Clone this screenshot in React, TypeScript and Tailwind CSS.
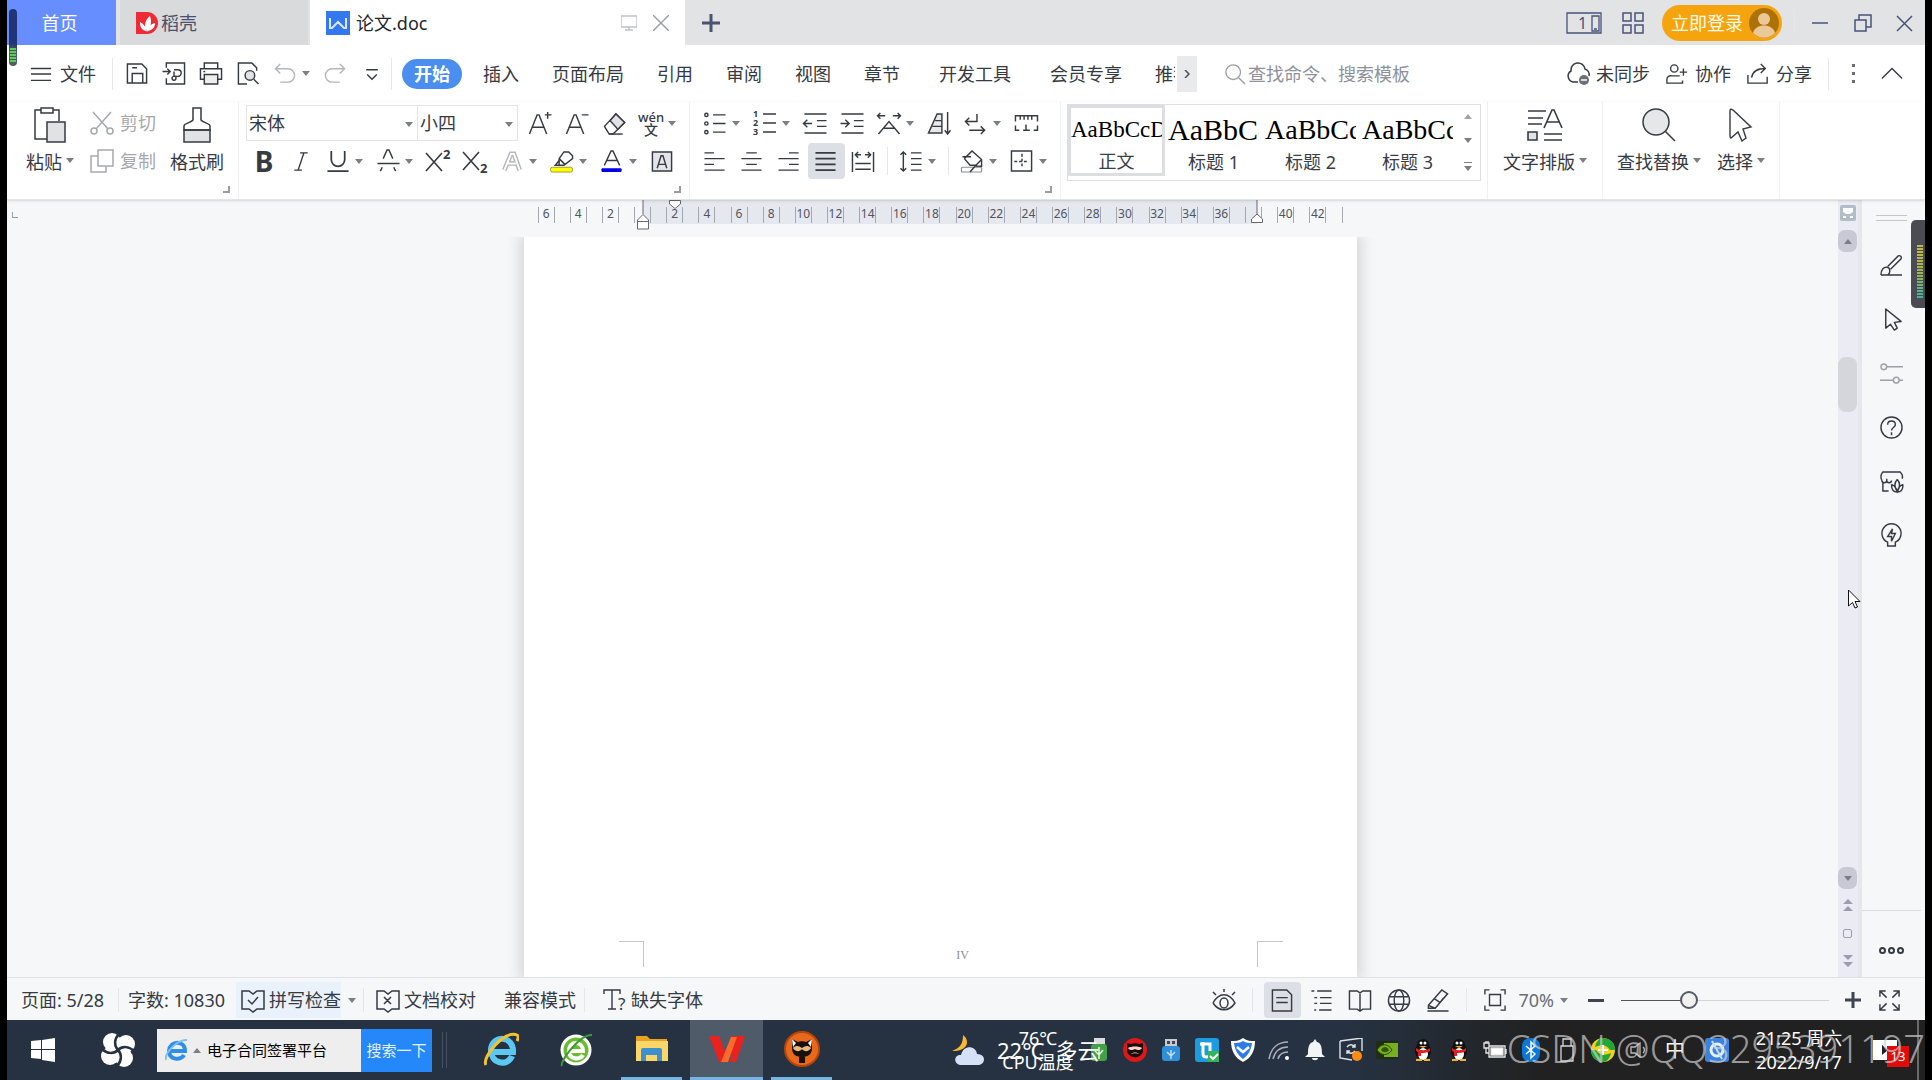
import type { ReactNode } from 'react';
import clsx from 'clsx';

const icons: Record<string, ReactNode> = {
  menu: <path d="M1 6h22M1 12h22M1 19h22" />,
  save: <path d="M2 2h15l5 5v15H2zM7 22v-10h11v10M7 6h5" />,
  exportPdf: (
    <path d="M4 6V1h19v22H4v-6M0 10h8M5 7l3 3-3 3M12 8h4a3 3 0 0 1 0 7h-4v-5M12 15a2 2 0 1 0 2 2v-3" />
  ),
  print: (
    <>
      <path d="M5 7V1h14v6M5 18H1V7h22v11h-4" />
      <path d="M5 13h14v10H5z" fill="#eceded" />
      <path d="M4 10h2" />
    </>
  ),
  preview: (
    <>
      <path d="M11 23H2V1h14l5 5v3" />
      <circle cx="14" cy="14" r="5" fill="#e0e2e6" />
      <path d="m18 18 5 5" />
    </>
  ),
  undo: <path d="M7 2 2 7l5 5M2 7h13a7 7 0 0 1 0 14H7" />,
  redo: <path d="m17 2 5 5-5 5M22 7H9a7 7 0 0 0 0 14h8" />,
  customize: <path d="M6 8h12M7 13l5 5 5-5" />,
  search: (
    <>
      <circle cx="10" cy="10" r="8" />
      <path d="m16 16 7 7" />
    </>
  ),
  cloud: (
    <>
      <path d="M12 20H7A6 6 0 0 1 5 9a7 7 0 0 1 14-2 6 6 0 0 1 4 7" />
      <circle cx="18" cy="18" r="5" fill="#6b6f78" stroke="none" />
      <path d="M15 18h6" stroke="#fff" />
    </>
  ),
  person: (
    <>
      <circle cx="9" cy="6" r="4" />
      <path d="M15 14H6a4 4 0 0 0-5 4v4h17v-3M15 10h8M19 6v8" />
    </>
  ),
  share: <path d="M1 13v9h21v-7M5 16c1-7 6-10 15-10M15 1l5 5-5 5" />,
  collapse: <path d="m1 17 11-11 11 11" />,
  scissors: (
    <>
      <circle cx="4" cy="20" r="3" />
      <circle cx="20" cy="20" r="3" />
      <path d="M3 1l15 17M21 1 6 18" />
    </>
  ),
  copy: <path d="M8 1h15v16H8zM8 7H1v16h15v-6" />,
  italic: <path d="M11 3h8M5 21h8M15 3 9 21" />,
  underline: <path d="M5 1v9a7 7 0 0 0 14 0V1M1 22h22" strokeWidth="1.8" />,
  strike: <path d="m7 9 4-9h2l4 9M1 14h23M4 22l2-4M20 22l-2-4" />,
  grow: <path d="M1 23 9 3h2l8 20M4 16h12M17 3h7M20 0v7" />,
  shrink: <path d="M1 23 9 3h2l8 20M4 16h12M17 3h7" />,
  eraser: (
    <>
      <path d="M2 15 14 2l9 9-12 12H7z" />
      <path d="m8 9 6-7 9 9-7 7z" fill="#e0e2e6" />
      <path d="M7 23h14" />
    </>
  ),
  effect: (
    <>
      <path d="m4 21 7-17h3l6 17M8 14h8" strokeWidth="5" stroke="#b5b7ba" />
      <path d="m4 21 7-17h3l6 17M8 14h8" strokeWidth="2" stroke="#fff" />
    </>
  ),
  highlight: (
    <>
      <rect x="0" y="18" width="23" height="5" rx="2" fill="#ffff00" stroke="#9a9a30" strokeWidth="1" />
      <path d="M14 2h5l4 4v3l-9 7H9V9zM9 9l6 6M9 11l-4 5h6" />
    </>
  ),
  fontColor: (
    <>
      <path d="m4 16 7-15h2l7 15M7 11h10" />
      <rect x="1" y="19" width="21" height="4" rx="1" fill="#0000e6" stroke="none" />
    </>
  ),
  charBox: (
    <>
      <path d="M2 2h20v20H2z" fill="#e3e5e8" />
      <path d="m7 19 4-13h2l4 13M9 15h6" />
    </>
  ),
  bullets: (
    <>
      <path d="M10 3h13M10 12h13M10 21h13" />
      <circle cx="3" cy="3" r="1.7" />
      <circle cx="3" cy="12" r="1.7" />
      <circle cx="3" cy="21" r="1.7" />
    </>
  ),
  outdent: <path d="M1 2h23M14 9h10M14 15h10M1 22h23M0 12h9M4 8l-4 4 4 4" />,
  indent: <path d="M1 2h23M14 9h10M14 15h10M1 22h23M0 12h9M5 8l4 4-4 4" />,
  scale: <path d="m1 23 11-13 11 13M6 17h12M0 4h8M16 4h8M3 1 0 4l3 3M21 1l3 3-3 3" />,
  sort: (
    <>
      <path d="M10 2h5v20H1z" fill="#e8e9ea" />
      <path d="M8 9h7M5 15h10M21 0v23M18 19l3 4 3-4" />
    </>
  ),
  wrap: <path d="M13 2v8H1M5 6l-4 4 4 4M5 19h16M17 15l4 4-4 4" />,
  tabs: <path d="M1 10V4h23v6M6 4v4M10 4v4M14 4v4M18 4v4M1 14v5h4M9 19h7M12 13v6M24 14v5h-4" />,
  left: <path d="M1 3h10M1 9h21M1 15h10M1 21h21" />,
  center: <path d="M6 3h11M1 9h21M6 15h11M1 21h21" />,
  right: <path d="M12 3h10M1 9h21M12 15h10M1 21h21" />,
  justify: <path d="M1 3h21M1 9h21M1 15h21M1 21h21" strokeWidth="2" />,
  distribute: <path d="M1 2v21M23 2v21M4 5h6M14 5h6M7 2 4 5l3 3M17 2l3 3-3 3M4 14h16M4 20h16" />,
  spacing: <path d="M4 2v20M1 5l3-3 3 3M1 19l3 3 3-3M12 3h11M12 9h11M12 15h11M12 21h11" />,
  bucket: (
    <>
      <path d="M4 9 12 1l10 9v7h-6M4 9l6 7h6l6-6M2 7h9" />
      <rect x="1" y="18" width="21" height="5" rx="1" stroke="#8a8d93" strokeWidth="1.2" />
      <path d="m16 16-6 7" />
    </>
  ),
  border: (
    <>
      <path d="M1 1h21v21H1z" />
      <path d="M12 4v15M4 12h15" strokeDasharray="3 2" />
    </>
  ),
  spell: <path d="M5 3H1v18h7l4 3 4-3h7V3h-7l-4 3-4-3H5M7 12l4 4 6-7" />,
  proof: <path d="M5 3H1v18h7l4 3 4-3h7V3h-7l-4 3-4-3H5M8 9l7 7M15 9l-7 7" />,
  eye: (
    <>
      <path d="M1 15c6-11 16-11 22 0-6 9-16 9-22 0M12 1v3M1 4l3 3M23 4l-3 3" />
      <ellipse cx="12" cy="15" rx="4" ry="5" />
    </>
  ),
  pageView: <path d="M2 1h15l5 5v17H2zM6 9h12M6 14h12" />,
  outline: <path d="M2 2h3M8 2h15M5 9h3M11 9h12M5 15h3M11 15h12M5 22h2M10 22h13" />,
  book: <path d="M1 2h8l3 2 3-2h8v19h-8l-3 2-3-2H1zM12 4v18" />,
  globe: (
    <>
      <circle cx="12" cy="12" r="11" />
      <ellipse cx="12" cy="12" rx="5" ry="11" />
      <path d="M2 8h20M2 16h20" />
    </>
  ),
  pen: <path d="m2 17 14-16 6 4L9 20H2zM2 17l7 3M8 10l6 4M1 23h22M18 9l-7 9" />,
  fit: <path d="M1 6V1h5M18 1h5v5M1 18v5h5M18 23h5v-5M6 6h12v12H6z" />,
  full: <path d="M2 8V2h6M2 2l7 7M16 2h6v6M22 2l-7 7M2 16v6h6M2 22l7-7M22 16v6h-6M22 22l-7-7" />,
  brush: <path d="M1 22h22M1 22c0-6 3-9 7-8 3 1 3 6 0 8M8 13 19 2c2-1 4 1 3 3L11 16" />,
  pointer: <path d="M6 1v20l5-4 4 6 3-2-3-6 7-1z" strokeLinejoin="round" />,
  sliders: (
    <>
      <circle cx="4" cy="5" r="3" />
      <circle cx="17" cy="19" r="3" />
      <path d="M7 5h17M0 19h14M20 19h4" />
    </>
  ),
  help: (
    <>
      <circle cx="12" cy="12" r="11" />
      <path d="M8 9c0-5 8-5 8 0 0 3-4 3-4 6M12 17v3" />
    </>
  ),
  shop: (
    <>
      <path d="M3 13v9h6M2 11C0 8 1 4 3 2h18c2 2 3 5 2 7M2 11c0 3 5 3 5 0V9M7 11c0 3 5 3 5 0" />
      <path d="M18 10c-3 3-3 8 0 13 3-5 3-10 0-13M12 15c0 5 2 8 6 8-1-5-3-7-6-8M24 15c0 5-2 8-6 8 1-5 3-7 6-8" />
    </>
  ),
  bulb: <path d="M8 19a10 10 0 1 1 8 0v4H8zM13 5l-5 8h4v5l4-8h-4z" />,
};

type IconProps = { name: string; className?: string };

function Icon({ name, className = 'h-6 w-6' }: IconProps) {
  return (
    <svg
      viewBox="0 0 24 24"
      className={clsx('shrink-0 overflow-visible', className)}
      fill="none"
      stroke="currentColor"
      strokeWidth="1.5"
      aria-hidden="true"
    >
      {icons[name]}
    </svg>
  );
}

function Caret({ className = '' }: { className?: string }) {
  return (
    <svg viewBox="0 0 8 5" className={clsx('h-[5px] w-2 shrink-0', className)} aria-hidden="true">
      <path d="M0 0h8L4 5z" fill="#7b7e84" />
    </svg>
  );
}

function Tool({
  label,
  icon,
  caret,
  active,
  className,
  children,
}: {
  label: string;
  icon?: string;
  caret?: boolean;
  active?: boolean;
  className?: string;
  children?: ReactNode;
}) {
  return (
    <button
      type="button"
      aria-label={label}
      className={clsx(
        'flex h-9 shrink-0 items-center gap-[5px] pl-[6px]',
        caret ? 'w-[50px]' : 'w-[37px]',
        active && 'rounded-sm bg-[#dcdfe5]',
        className
      )}
    >
      {icon ? <Icon name={icon} className="h-[23px] w-6" /> : children}
      {caret && <Caret />}
    </button>
  );
}

function BigTool({ label, caret, children }: { label: string; caret?: boolean; children: ReactNode }) {
  return (
    <button type="button" className="flex shrink-0 flex-col items-center">
      <span className="flex h-[42px] items-center">{children}</span>
      <span className="flex h-8 items-center gap-1">
        {label}
        {caret && <Caret className="-mt-1" />}
      </span>
    </button>
  );
}

function Group({ children, className, corner }: { children: ReactNode; className?: string; corner?: boolean }) {
  return (
    <div className={clsx('relative flex shrink-0 border-r border-[#f0f1f2] pt-[2px]', className)}>
      {children}
      {corner && (
        <span className="absolute right-2 bottom-[6px] h-[7px] w-[7px] border-r-2 border-b-2 border-[#9a9ca0]" />
      )}
    </div>
  );
}

const Row = ({ children }: { children: ReactNode }) => <div className="flex h-[38px] items-center">{children}</div>;

const Divider = ({ className = 'h-8' }: { className?: string }) => (
  <span className={clsx('w-px shrink-0 bg-[#e6e7e9]', className)} />
);

function TabBar() {
  return (
    <header className="flex h-[45px] shrink-0 items-stretch bg-[#e1e3e5] pt-px">
      <button type="button" className="-mt-px w-[109px] bg-[#668eff] pr-1 text-white">
        首页
      </button>
      <button type="button" className="-mt-px ml-1 flex w-[188px] items-center gap-[2px] bg-[#d9dadc] pt-px pl-[15px] text-[#4b4f6b]">
        <svg viewBox="0 0 24 24" className="h-6 w-6" aria-hidden="true">
          <path d="M1 1h11a11 11 0 0 1 0 22H1z" fill="#ec2b36" />
          <path d="M12 21C8 14 11 8 15 5c2 6 1 11-3 16M11 20c-5-1-6-5-6-9 4 2 6 5 6 9M13 20c1-5 3-7 7-8 0 5-3 7-7 8" fill="#fff" />
        </svg>
        稻壳
      </button>
      <div className="-mt-px ml-[2px] flex w-[375px] items-center bg-white px-4 pt-px">
        <svg viewBox="0 0 24 24" className="h-6 w-6" aria-hidden="true">
          <path d="M0 0h24v24H0z" fill="#3478f0" />
          <path d="M4 7v10h2l6-6 6 6h2V7" fill="none" stroke="#d9e8ff" strokeWidth="2" />
        </svg>
        <span className="ml-[6px] text-[#24262b]">论文.doc</span>
        <svg viewBox="0 0 16 16" className="ml-auto h-4 w-4 text-[#bfc1c8]" fill="none" stroke="currentColor" aria-hidden="true">
          <path d="M0 1h16v11H0zM8 12v3M4 15h8" strokeWidth="1.4" />
        </svg>
        <button type="button" aria-label="关闭标签" className="ml-4 text-[#9a9da6]">
          <svg viewBox="0 0 16 16" className="h-4 w-4" fill="none" stroke="currentColor" strokeWidth="1.4">
            <path d="m0 0 16 16M16 0 0 16" />
          </svg>
        </button>
      </div>
      <button type="button" aria-label="新建标签" className="flex w-[52px] items-center justify-center text-[#4a5370]">
        <svg viewBox="0 0 18 18" className="h-[18px] w-[18px]" fill="none" stroke="currentColor" strokeWidth="3">
          <path d="M9 0v18M0 9h18" />
        </svg>
      </button>
      <div className="ml-auto flex items-center text-[#4a5378]">
        <button type="button" aria-label="窗口模式">
          <svg viewBox="0 0 36 22" className="h-[22px] w-9" fill="none" stroke="currentColor" strokeWidth="1.3">
            <path d="M1 1h34v20H1zM26 4h7v15h-7zM28 17h3" />
            <text x="12" y="17" fontSize="16" fill="currentColor" stroke="none">1</text>
          </svg>
        </button>
        <button type="button" aria-label="应用" className="ml-5">
          <svg viewBox="0 0 22 22" className="h-[22px] w-[22px]" fill="none" stroke="currentColor" strokeWidth="1.5">
            <path d="M1 1h8v8H1zM13 1h8v8h-8zM1 13h8v8H1zM13 13h8v8h-8z" />
          </svg>
        </button>
        <button type="button" className="ml-[18px] flex h-9 w-[120px] items-center gap-[6px] rounded-full bg-[#f5a40e] pl-[9px] text-[#fffbe8]">
          立即登录
          <svg viewBox="0 0 30 30" className="h-[30px] w-[30px] shrink-0" aria-hidden="true">
            <circle cx="15" cy="15" r="15" fill="#ad7206" />
            <circle cx="15" cy="11" r="6" fill="#ecc898" />
            <path d="M4 25c2-10 20-10 22 0a15 15 0 0 1-22 0" fill="#ecc898" />
          </svg>
        </button>
        <Divider className="mr-1 ml-3 h-6 bg-[#d3d5d9]" />
        {[
          ['最小化', 'M0 8h16'],
          ['还原', 'M1 5h11v11H1zM5 5V0h12v12h-5'],
          ['关闭', 'm1 1 15 15M16 1 1 16'],
        ].map(([label, d]) => (
          <button key={label} type="button" aria-label={label} className="flex h-9 w-[42px] items-center justify-center">
            <svg viewBox="0 0 17 17" className="h-[17px] w-[17px] overflow-visible" fill="none" stroke="currentColor" strokeWidth="1.5">
              <path d={d} />
            </svg>
          </button>
        ))}
      </div>
    </header>
  );
}

const menuTabs = [
  { label: '插入' },
  { label: '页面布局' },
  { label: '引用' },
  { label: '审阅' },
  { label: '视图' },
  { label: '章节' },
  { label: '开发工具', wide: true },
  { label: '会员专享', wide: true },
];

function MenuBar() {
  return (
    <nav className="flex h-[57px] shrink-0 items-center bg-white pl-[23px] whitespace-nowrap">
      <button type="button" className="flex items-center gap-2">
        <Icon name="menu" className="h-[22px] w-[22px]" />
        文件
      </button>
      <Divider className="ml-4 h-8" />
      <div className="ml-[6px] flex">
        <Tool label="保存" icon="save" />
        <Tool label="输出为PDF" icon="exportPdf" />
        <Tool label="打印" icon="print" />
        <Tool label="打印预览" icon="preview" />
        <Tool label="撤销" icon="undo" caret className="text-[#b4b6ba]" />
        <Tool label="恢复" icon="redo" className="text-[#b4b6ba]" />
        <Tool label="自定义快速访问" icon="customize" />
      </div>
      <Divider className="h-8" />
      <button type="button" className="ml-[10px] h-[30px] w-[60px] rounded-full bg-[#4a8ff0] font-bold text-white">
        开始
      </button>
      <div className="ml-[21px] flex gap-[33px]">
        {menuTabs.map((tab) => (
          <button key={tab.label} type="button" className={clsx(tab.wide && 'pl-[6px]')}>
            {tab.label}
          </button>
        ))}
        <button type="button" className="w-5 overflow-hidden text-left">
          推荐
        </button>
      </div>
      <button type="button" aria-label="更多选项卡" className="ml-[2px] flex h-9 w-5 items-center justify-center bg-[#e9eaec]">
        <svg viewBox="0 0 6 8" className="h-2 w-[6px]" fill="none" stroke="#4a4d55" strokeWidth="1.5">
          <path d="m1 0 4 4-4 4" />
        </svg>
      </button>
      <label className="ml-[27px] flex items-center gap-[2px] text-[#9c9fa6]">
        <Icon name="search" className="h-[22px] w-[22px]" />
        <input
          type="search"
          aria-label="查找命令、搜索模板"
          placeholder="查找命令、搜索模板"
          className="w-[200px] bg-transparent outline-none placeholder:text-[#8e919c]"
        />
      </label>
      <div className="ml-auto flex items-center gap-4 pr-[22px]">
        <button type="button" className="flex items-center gap-[6px]">
          <Icon name="cloud" />
          未同步
        </button>
        <button type="button" className="flex items-center gap-[7px]">
          <Icon name="person" className="h-[22px] w-[22px]" />
          协作
        </button>
        <button type="button" className="flex items-center gap-[7px]">
          <Icon name="share" className="h-[22px] w-[22px]" />
          分享
        </button>
        <Divider />
        <button type="button" aria-label="更多" className="flex w-4 flex-col items-center gap-[5px]">
          <i className="h-[3px] w-[3px] bg-[#6b6e76]" />
          <i className="h-[3px] w-[3px] bg-[#6b6e76]" />
          <i className="h-[3px] w-[3px] bg-[#6b6e76]" />
        </button>
        <button type="button" aria-label="折叠功能区" className="ml-1">
          <Icon name="collapse" className="h-[22px] w-[22px]" />
        </button>
      </div>
    </nav>
  );
}

const styleItems = [
  { label: '正文', size: 'text-[23px]', active: true },
  { label: '标题 1', size: 'text-[30px]' },
  { label: '标题 2', size: 'text-[28px]' },
  { label: '标题 3', size: 'text-[28px]' },
];

function Ribbon() {
  return (
    <section className="z-10 flex h-[98px] shrink-0 border-b border-[#e3e4e6] bg-white whitespace-nowrap shadow-sm">
      <Group corner className="pr-[14px] pl-[19px]">
        <BigTool label="粘贴" caret>
          <svg viewBox="0 0 32 36" className="h-9 w-8" fill="none" stroke="currentColor" strokeWidth="1.5" aria-hidden="true">
            <path d="M7 3H1v29h12M19 3h6v11M7 1h12v5H7z" />
            <path d="M13 15h18v20H13z" fill="#e0e2e4" />
          </svg>
        </BigTool>
        <div className="ml-4 text-[#a6a8ac]">
          <Row>
            <button type="button" className="flex items-center gap-[6px]">
              <Icon name="scissors" />
              剪切
            </button>
          </Row>
          <Row>
            <button type="button" className="flex items-center gap-[6px]">
              <Icon name="copy" />
              复制
            </button>
          </Row>
        </div>
        <div className="ml-[14px] flex">
          <BigTool label="格式刷">
            <svg viewBox="0 0 28 36" className="h-9 w-7" fill="none" stroke="currentColor" strokeWidth="1.5" aria-hidden="true">
              <path d="M1 23h26v12H1z" fill="#e0e2e4" />
              <path d="M10 1h8v12c2 3 9 3 9 6v4H1v-4c0-3 7-3 9-6z" />
            </svg>
          </BigTool>
        </div>
      </Group>

      <Group corner className="pr-[6px] pl-[7px]">
        <div>
          <Row>
            <div className="mr-1 flex h-9 w-[272px] border border-[#e3e4e7]">
              <div className="relative w-[171px] border-r border-[#e3e4e7]">
                <select aria-label="字体" className="h-full w-full appearance-none bg-transparent pl-[2px]">
                  <option>宋体</option>
                </select>
                <Caret className="pointer-events-none absolute top-4 right-1" />
              </div>
              <div className="relative flex-1">
                <select aria-label="字号" className="h-full w-full appearance-none bg-transparent pl-[2px]">
                  <option>小四</option>
                </select>
                <Caret className="pointer-events-none absolute top-4 right-1" />
              </div>
            </div>
            <Tool label="增大字号" icon="grow" />
            <Tool label="减小字号" icon="shrink" />
            <Tool label="清除格式" icon="eraser" />
            <Tool label="拼音指南" caret>
              <svg viewBox="0 0 24 24" className="h-6 w-6 shrink-0 overflow-visible" fill="currentColor" aria-hidden="true">
                <text x="12" y="11" fontSize="13" fontWeight="500" textAnchor="middle">wén</text>
                <text x="12" y="24" fontSize="14" fontWeight="500" textAnchor="middle">文</text>
              </svg>
            </Tool>
          </Row>
          <Row>
            <Tool label="加粗">
              <span className="w-6 text-center text-[28px] leading-6 font-bold">B</span>
            </Tool>
            <Tool label="倾斜" icon="italic" />
            <Tool label="下划线" icon="underline" caret />
            <Tool label="删除线" icon="strike" caret />
            <Tool label="上标">
              <svg viewBox="0 0 24 24" className="h-6 w-6 shrink-0 overflow-visible" fill="none" stroke="currentColor" strokeWidth="1.6">
                <path d="m0 4 16 18M16 4 0 22" />
                <text x="17" y="10" fontSize="13" fontWeight="700" fill="currentColor" stroke="none">2</text>
              </svg>
            </Tool>
            <Tool label="下标">
              <svg viewBox="0 0 24 24" className="h-6 w-6 shrink-0 overflow-visible" fill="none" stroke="currentColor" strokeWidth="1.6">
                <path d="m0 3 16 18M16 3 0 21" />
                <text x="17" y="24" fontSize="13" fontWeight="700" fill="currentColor" stroke="none">2</text>
              </svg>
            </Tool>
            <Tool label="文字效果" icon="effect" caret />
            <Tool label="突出显示" icon="highlight" caret />
            <Tool label="字体颜色" icon="fontColor" caret />
            <Tool label="字符底纹" icon="charBox" />
          </Row>
        </div>
      </Group>

      <Group corner className="pr-[6px] pl-[7px]">
        <div>
          <Row>
            <Tool label="项目符号" icon="bullets" caret />
            <Tool label="编号" caret>
              <svg viewBox="0 0 24 24" className="h-6 w-6 shrink-0 overflow-visible" stroke="currentColor" strokeWidth="1.5">
                <path d="M10 3h13M10 12h13M10 21h13" />
                <g fontSize="9" fontWeight="700" fill="currentColor" stroke="none">
                  <text x="0" y="6">1</text>
                  <text x="0" y="15">2</text>
                  <text x="0" y="24">3</text>
                </g>
              </svg>
            </Tool>
            <Tool label="减少缩进" icon="outdent" />
            <Tool label="增加缩进" icon="indent" />
            <Tool label="中文版式" icon="scale" caret />
            <Tool label="排序" icon="sort" />
            <Tool label="显示段落标记" icon="wrap" caret />
            <Tool label="制表位" icon="tabs" />
          </Row>
          <Row>
            <Tool label="左对齐" icon="left" />
            <Tool label="居中对齐" icon="center" />
            <Tool label="右对齐" icon="right" />
            <Tool label="两端对齐" icon="justify" active />
            <Tool label="分散对齐" icon="distribute" />
            <Divider className="mx-[5px] h-7" />
            <Tool label="行距" icon="spacing" caret />
            <Divider className="mx-[5px] h-7" />
            <Tool label="底纹颜色" icon="bucket" caret />
            <Tool label="边框" icon="border" caret />
          </Row>
        </div>
      </Group>

      <Group className="px-[6px]">
        <div className="flex h-[77px] border border-[#dedfe1]">
          {styleItems.map((item) => (
            <button
              key={item.label}
              type="button"
              className={clsx(
                'flex w-[97px] flex-col items-center overflow-hidden border-3 text-[#3a3d44]',
                item.active ? 'mb-1 border-[#dddee0]' : 'border-transparent'
              )}
            >
              <span className={clsx("h-[42px] w-full overflow-hidden text-left font-['Liberation_Serif'] leading-[44px] text-black", item.size)}>
                AaBbCcDd
              </span>
              <span className="leading-6">{item.label}</span>
            </button>
          ))}
          <div className="flex w-6 flex-col items-center justify-around">
            <button type="button" aria-label="上一行">
              <Caret className="rotate-180 opacity-70" />
            </button>
            <button type="button" aria-label="下一行">
              <Caret />
            </button>
            <button type="button" aria-label="更多样式" className="border-t border-[#7b7e84] pt-[3px]">
              <Caret />
            </button>
          </div>
        </div>
      </Group>

      <Group className="px-[15px]">
        <BigTool label="文字排版" caret>
          <svg viewBox="0 0 36 34" className="h-[34px] w-9" fill="none" stroke="currentColor" strokeWidth="1.6" aria-hidden="true">
            <path d="M1 3h18M1 10h15M1 16h14M17 20l8-18h2l8 18M20 14h12M17 26h18M17 32h18" />
            <path d="M1 24h9v8H1z" fill="#e0e2e4" />
          </svg>
        </BigTool>
      </Group>
      <Group className="gap-4 px-[14px]">
        <BigTool label="查找替换" caret>
          <svg viewBox="0 0 34 34" className="h-[34px] w-[34px]" fill="none" stroke="currentColor" strokeWidth="1.5" aria-hidden="true">
            <circle cx="14" cy="14" r="13" fill="#e6e7e9" />
            <path d="m23 23 10 10" />
          </svg>
        </BigTool>
        <BigTool label="选择" caret>
          <svg viewBox="0 0 24 34" className="h-[34px] w-6" fill="none" stroke="currentColor" strokeWidth="1.4" aria-hidden="true">
            <path d="M1 3q0-3 3-1l18 17-8 2 3 9-4 3-4-9-7 6q-1 0-1-3z" />
          </svg>
        </BigTool>
      </Group>
    </section>
  );
}

const rulerLabels = [
  '6', '4', '2', '', '2', '4', '6', '8', '10', '12', '14', '16', '18',
  '20', '22', '24', '26', '28', '30', '32', '34', '36', '', '40', '42',
];

function Document() {
  return (
    <main className="flex min-w-0 flex-1 flex-col bg-[#f5f7f9]">
      <div className="flex h-[37px] shrink-0">
        <span className="mt-3 ml-[5px] h-[6px] w-[6px] border-b border-l border-[#999ca3]" />
        <div className="flex flex-1 justify-center pl-[25px]">
          <div className="relative h-6 w-[833px] pt-[7px]">
            <div className="absolute top-0 bottom-0 left-[119px] w-[614px] bg-[#e6e8f0]" />
            <div className="relative flex w-[826px] pl-[6px] text-[12px] leading-[13px] text-[#50545e]">
              {rulerLabels.map((label, i) => (
                <div key={i} className="flex flex-1 justify-center">
                  <span className="flex h-4 w-[17px] justify-center border-x border-[#a5a8b0]">{label}</span>
                </div>
              ))}
              <span className="ml-2 h-4 w-2 border-l border-[#a5a8b0]" />
            </div>
            <svg viewBox="0 0 12 30" className="absolute top-0 left-[113px] h-[30px] w-3" fill="#fff" stroke="#666972">
              <path d="M6 0v14M.5 20 6 14.500l5.500 5.500v9H.5zM.5 21.500h11" />
            </svg>
            <svg viewBox="0 0 12 9" className="absolute top-0 left-[145px] h-[9px] w-3" fill="#fff" stroke="#666972">
              <path d="M.5.500h11V4L6 8.500.500 4z" />
            </svg>
            <svg viewBox="0 0 12 24" className="absolute top-0 left-[727px] h-6 w-3" fill="#fff" stroke="#666972">
              <path d="M6 0v14M.5 22.500V19L6 14l5.500 5v3.500z" />
            </svg>
          </div>
        </div>
      </div>
      <div className="flex flex-1 justify-center overflow-hidden pl-9">
        <article className="flex w-[833px] flex-col justify-end bg-white pr-[74px] pb-[10px] pl-[95px] shadow-[0_0_14px_4px_rgba(0,0,0,0.14)]">
          <div className="flex justify-between">
            <span className="h-[26px] w-[25px] border-t border-r border-[#c4c6ca]" />
            <span className="pt-[6px] pl-6 font-['Liberation_Serif'] text-[12px] leading-4 text-[#8c8f94]">IV</span>
            <span className="h-[26px] w-[26px] border-t border-l border-[#c4c6ca]" />
          </div>
        </article>
      </div>
    </main>
  );
}

function ScrollBar() {
  return (
    <div className="flex w-6 shrink-0 flex-col border-r-4 border-[#e6e7ea] bg-[#ebecf3] text-[#9c9cb2]">
      <svg viewBox="0 0 16 16" className="mt-[5px] ml-[2px] h-4 w-4" aria-hidden="true">
        <rect width="16" height="16" rx="2" fill="#b3bcc9" />
        <path d="M3 3h10v4l-3 2H6L3 7zM3 11h3v2H3zM10 11h3v2h-3z" fill="#fff" />
      </svg>
      <button type="button" aria-label="向上滚动" className="mt-[9px] flex h-[22px] w-[19px] items-center justify-center rounded-[7px] bg-[#c9c9d6]">
        <Caret className="rotate-180" />
      </button>
      <div className="mt-[105px] h-[55px] w-[19px] rounded-[8px] bg-[#d5d6dc]" />
      <button type="button" aria-label="向下滚动" className="mt-auto flex h-[22px] w-[19px] items-center justify-center rounded-[7px] bg-[#c9c9d6]">
        <Caret />
      </button>
      <button type="button" aria-label="上一页" className="mt-2 flex h-4 w-[19px] items-center justify-center">
        <svg viewBox="0 0 10 12" className="h-3 w-[10px]" fill="currentColor">
          <path d="m0 5 5-5 5 5zM0 12l5-5 5 5z" />
        </svg>
      </button>
      <button type="button" aria-label="选择浏览对象" className="mt-3 flex h-4 w-[19px] items-center justify-center">
        <i className="h-[9px] w-[9px] rounded-[2px] border border-current" />
      </button>
      <button type="button" aria-label="下一页" className="mt-3 mb-2 flex h-4 w-[19px] items-center justify-center">
        <svg viewBox="0 0 10 12" className="h-3 w-[10px]" fill="currentColor">
          <path d="m0 0 5 5 5-5zM0 7l5 5 5-5z" />
        </svg>
      </button>
    </div>
  );
}

const sideTools = [
  ['样式', 'brush'],
  ['选择', 'pointer'],
  ['设置', 'sliders'],
  ['帮助', 'help'],
  ['稻壳资源', 'shop'],
  ['备份', 'bulb'],
];

function SidePanel() {
  return (
    <aside className="relative flex w-[63px] shrink-0 flex-col items-center bg-[#f5f7f9] pt-[15px] pr-1">
      <div className="h-[6px] w-[31px] border-y border-[#c5c7cb]" />
      <div className="mt-[17px] flex flex-col">
        {sideTools.map(([label, icon]) => (
          <button
            key={label}
            type="button"
            aria-label={label}
            className={clsx('flex h-[54px] w-9 items-center justify-center', icon === 'sliders' && 'text-[#9da0a7]')}
          >
            <Icon name={icon} className="h-[23px] w-[23px]" />
          </button>
        ))}
      </div>
      <div className="mt-auto flex h-[67px] w-full items-center border-t border-[#dcdee1] pt-3 pl-[17px]">
        <button type="button" aria-label="更多" className="flex gap-[2px]">
          <i className="h-[7px] w-[7px] rounded-full border-2 border-current" />
          <i className="h-[7px] w-[7px] rounded-full border-2 border-current" />
          <i className="h-[7px] w-[7px] rounded-full border-2 border-current" />
        </button>
      </div>
      {/* volume meter */}
      <div className="absolute top-5 right-0 h-[88px] w-[14px] rounded-l-[5px] bg-[#4b4b54] pt-6 pl-[6px]">
        <div className="h-[54px] w-[6px] bg-[repeating-linear-gradient(to_bottom,#4b4b54_0_1px,transparent_1px_3px),linear-gradient(to_bottom,#c8b848,#a3b64a_50%,#3fb0a0)]" />
      </div>
      <svg viewBox="0 0 13 20" className="absolute top-[389px] -left-[14px] h-5 w-[13px]" fill="#fff" stroke="#111" aria-hidden="true">
        <path d="M.5 1v16l4-3.500 2.500 5.500 2.500-1-2.500-5.500h5z" />
      </svg>
    </aside>
  );
}

function StatusBar() {
  return (
    <footer className="flex h-[43px] shrink-0 items-center border-t border-[#dfe1e4] bg-[#f5f7f9] pt-[2px] pl-[14px] whitespace-nowrap">
      <span className="w-[97px]">页面: 5/28</span>
      <Divider className="h-6" />
      <span className="ml-[9px]">字数: 10830</span>
      <button type="button" className="ml-[11px] flex h-9 items-center gap-1 bg-[#e9f1fa] pl-[5px]">
        <Icon name="spell" />
        拼写检查
      </button>
      <Caret className="ml-[7px]" />
      <Divider className="ml-[7px] h-6" />
      <button type="button" className="ml-3 flex items-center gap-1">
        <Icon name="proof" />
        文档校对
      </button>
      <span className="ml-7">兼容模式</span>
      <Divider className="ml-2 h-6" />
      <button type="button" className="ml-[18px] flex items-center gap-1">
        <svg viewBox="0 0 24 24" className="h-6 w-6 overflow-visible" fill="none" stroke="currentColor" strokeWidth="1.4" aria-hidden="true">
          <path d="M1 6V2h16v4M9 2v19M5 21h8" />
          <text x="15" y="22" fontSize="17" fill="currentColor" stroke="none">?</text>
        </svg>
        缺失字体
      </button>

      <div className="ml-auto flex items-center">
        <button type="button" aria-label="护眼模式">
          <Icon name="eye" />
        </button>
        <Divider className="ml-4 h-6" />
        <div className="ml-[11px] flex gap-[2px]">
          <Tool label="页面视图" icon="pageView" active />
          <Tool label="大纲视图" icon="outline" />
          <Tool label="阅读版式" icon="book" />
          <Tool label="Web版式" icon="globe" />
          <Tool label="写作模式" icon="pen" />
        </div>
        <Divider className="mr-[17px] ml-[9px] h-6" />
        <button type="button" aria-label="适合页面">
          <Icon name="fit" className="h-[22px] w-[22px]" />
        </button>
        <button type="button" className="ml-3 flex items-center gap-[6px] text-[#6a6d75]">
          70%
          <Caret />
        </button>
        <button type="button" aria-label="缩小" className="ml-5 flex h-6 w-4 items-center">
          <i className="h-[3px] w-4 bg-[#3f4450]" />
        </button>
        <input
          type="range"
          aria-label="缩放"
          min={0}
          max={100}
          defaultValue={31}
          className="ml-[17px] h-5 w-[208px] appearance-none bg-[linear-gradient(to_right,#4f535c_33%,#d3d5d8_33%)] bg-[length:100%_1px] bg-center bg-no-repeat [&::-webkit-slider-thumb]:h-[18px] [&::-webkit-slider-thumb]:w-[18px] [&::-webkit-slider-thumb]:appearance-none [&::-webkit-slider-thumb]:rounded-full [&::-webkit-slider-thumb]:border-2 [&::-webkit-slider-thumb]:border-[#565a62] [&::-webkit-slider-thumb]:bg-[#f1f1f2]"
        />
        <button type="button" aria-label="放大" className="ml-4">
          <svg viewBox="0 0 16 16" className="h-4 w-4" stroke="#3f4450" strokeWidth="3">
            <path d="M8 0v16M0 8h16" />
          </svg>
        </button>
        <button type="button" aria-label="全屏显示" className="mr-6 ml-[17px]">
          <Icon name="full" className="h-[23px] w-[23px]" />
        </button>
      </div>
    </footer>
  );
}

const penguin = (
  <svg viewBox="0 0 20 24" className="h-6 w-5">
    <ellipse cx="10" cy="13" rx="8" ry="9" fill="#101010" />
    <circle cx="10" cy="7" r="6" fill="#101010" />
    <ellipse cx="10" cy="16" rx="5" ry="6" fill="#fff" />
    <circle cx="8" cy="5" r="1.500" fill="#fff" />
    <circle cx="12" cy="5" r="1.500" fill="#fff" />
    <path d="M6 8h8l-4 2z" fill="#f5a623" />
    <path d="M3 10c4 3 10 3 14 0v3c-3 2-7 2-9 2v3H5v-4l-2-1z" fill="#e02020" />
    <path d="M3 21h6v2H3zM11 21h6v2h-6z" fill="#f5b030" />
  </svg>
);

const trayIcons: [string, ReactNode][] = [
  ['U盘', (
    <svg viewBox="0 0 18 24" className="h-6 w-[18px]">
      <path d="M4 0h11v7H4z" fill="#d9dde0" />
      <rect x="1" y="6" width="16" height="17" rx="3" fill="#43a047" />
      <path d="M9 21V9M5 13l4 4 4-5" fill="none" stroke="#e8f5e9" strokeWidth="1.500" />
    </svg>
  )],
  ['安全卫士', (
    <svg viewBox="0 0 26 26" className="h-[26px] w-[26px]">
      <circle cx="13" cy="13" r="12" fill="#e01717" />
      <path d="M5 6l4 1c2-1 6-1 8 0l4-1v9c-3 7-13 7-16 0z" fill="#1b0d0d" />
      <path d="M6 11c3-2 11-2 14 0-2 3-5 2-7 1-2 1-5 2-7-1M9 17c2-2 6-2 8 0-2-1-6-1-8 0" fill="#f8d9c8" />
    </svg>
  )],
  ['USB', (
    <svg viewBox="0 0 20 24" className="h-6 w-5">
      <path d="M4 1h12v7H4z" fill="#c8ccd0" />
      <path d="M6 3h3v3H6zM11 3h3v3h-3z" fill="#445" />
      <rect x="1" y="8" width="18" height="15" rx="3" fill="#2f8fd8" />
      <path d="M10 21v-9M6 14l4 4 4-4" fill="none" stroke="#bfe0f8" strokeWidth="1.500" />
    </svg>
  )],
  ['同步', (
    <svg viewBox="0 0 24 24" className="h-6 w-6">
      <rect width="24" height="24" rx="3" fill="#1c9be0" />
      <path d="M8 4v12c0 4 7 4 7 0V6H5" fill="none" stroke="#fff" strokeWidth="3" />
      <path d="M13 13h11v11H13z" fill="#35b558" />
      <path d="m15 18 3 3 5-5" fill="none" stroke="#fff" strokeWidth="2" />
    </svg>
  )],
  ['电脑管家', (
    <svg viewBox="0 0 24 24" className="h-6 w-6">
      <path d="M12 0c4 3 8 3 12 3 0 10-4 17-12 21C4 20 0 13 0 3c4 0 8 0 12-3" fill="#fff" />
      <path d="M12 3c3 2 6 2 9 2-1 8-4 12-9 16C7 17 4 13 3 5c3 0 6 0 9-2" fill="#2e7be8" />
      <path d="m6 9 6 5 6-5" fill="none" stroke="#fff" strokeWidth="2.500" />
    </svg>
  )],
  ['网络', (
    <svg viewBox="0 0 22 22" className="h-[22px] w-[22px]" fill="none" stroke="#aab1ba" strokeWidth="1.500">
      <path d="M1 20C3 9 10 3 20 3M5 20c2-8 7-12 15-12M10 20c1-4 4-7 10-7" />
      <circle cx="19" cy="19" r="2" fill="#fff" stroke="none" />
    </svg>
  )],
  ['提醒', (
    <svg viewBox="0 0 22 22" className="h-[22px] w-[22px]" fill="#f2f4f6">
      <path d="M11 0 13 3c4 1 5 5 5 12l3 3H1l3-3C4 8 5 4 9 3zM8 19h6c0 3-6 3-6 0" />
    </svg>
  )],
  ['更新', (
    <svg viewBox="0 0 24 24" className="h-6 w-6" fill="none" stroke="#dfe3e7" strokeWidth="1.400">
      <path d="M1 3 23 0v13M1 3v17l12 2M8 9c2-3 6-3 8 0M16 6v3h-3M16 13c-2 3-6 3-8 0M8 16v-3h3" />
      <circle cx="18" cy="18" r="5" fill="#ff8c10" stroke="none" />
    </svg>
  )],
  ['NVIDIA', (
    <svg viewBox="0 0 22 18" className="h-[18px] w-[22px]">
      <path d="M0 0h22v18H0z" fill="#1f2d14" />
      <path d="M8 2h14v14H8z" fill="#76b020" />
      <path d="M1 9c4-7 11-7 15 0-4 6-11 6-15 0" fill="#76b020" stroke="#2c4410" />
      <path d="M5 9c2-4 6-4 8 0-2 3-6 3-8 0" fill="#35560c" />
    </svg>
  )],
  ['QQ', penguin],
  ['QQ 2', penguin],
  ['电池', (
    <svg viewBox="0 0 24 18" className="h-[18px] w-6" fill="none" stroke="#e8e8e8" strokeWidth="1.300">
      <path d="M6 5h16v11H6zM23 8v5M1 2h5v5H1zM3 0v2M5 0v2M3 7v5h3" />
      <path d="M8 7h12v7H8z" fill="#fff" />
    </svg>
  )],
  ['蓝牙', (
    <svg viewBox="0 0 18 24" className="h-6 w-[18px]">
      <rect width="18" height="24" rx="8" fill="#0a78d8" />
      <path d="m4 8 9 8-4 4V4l4 4-9 8" fill="none" stroke="#fff" strokeWidth="1.500" />
    </svg>
  )],
  ['弹出设备', (
    <svg viewBox="0 0 14 24" className="h-6 w-[14px]" fill="none" stroke="#d8d8d8" strokeWidth="1.300">
      <path d="M3 8V1h8v7M1 8h12v15H1z" />
    </svg>
  )],
  ['360', (
    <svg viewBox="0 0 24 24" className="h-6 w-6">
      <circle cx="12" cy="12" r="12" fill="#f5d020" />
      <path d="M12 0a12 12 0 0 1 12 12h-5c-3-5-8-6-15-3 1-5 4-9 8-9M12 24A12 12 0 0 1 0 12h5c3 5 8 6 15 3-1 5-4 9-8 9" fill="#1fa83a" />
      <path d="M12 7v10M7 12h10" stroke="#fff" strokeWidth="2" />
    </svg>
  )],
  ['音量', (
    <svg viewBox="0 0 18 18" className="h-[18px] w-[18px]" fill="none" stroke="#bbb" strokeWidth="1.300">
      <path d="M1 6h4l5-4v14l-5-4H1zM13 6c2 2 2 4 0 6" />
    </svg>
  )],
];

function Taskbar() {
  return (
    <div className="relative flex h-[60px] shrink-0 items-center bg-[linear-gradient(to_right,#263242_70%,#212121_80%)] text-white">
      <button type="button" aria-label="开始菜单" className="ml-6">
        <svg viewBox="0 0 24 24" className="h-6 w-6" fill="#fff">
          <path d="M0 3 10 2v9H0zM11 2 24 0v11H11zM0 12h10v9L0 20zM11 12h13v12l-13-2z" />
        </svg>
      </button>
      <button type="button" aria-label="助手" className="ml-[46px]">
        <svg viewBox="0 0 34 34" className="h-[34px] w-[34px]">
          <g fill="#fff">
            <circle cx="11" cy="9" r="9" />
            <circle cx="25" cy="11" r="9" />
            <circle cx="23" cy="25" r="9" />
            <circle cx="9" cy="23" r="9" />
          </g>
          <path d="M17 17c-4-4-4-11 1-16M17 17c4-4 11-4 16 1M17 17c4 4 4 11-1 16M17 17c-4 4-11 4-16-1" fill="none" stroke="#263242" strokeWidth="2.500" />
        </svg>
      </button>
      <div className="ml-[22px] flex h-[43px] items-center bg-[#eeeeef]">
        <svg viewBox="0 0 24 24" className="ml-2 h-6 w-6" fill="none" aria-hidden="true">
          <path d="M4 13h16c0-11-15-11-16 0 0 9 12 10 15 4" stroke="#2f8fe8" strokeWidth="4" />
          <path d="M1 22C-1 16 12 1 22 2" stroke="#7cc0f5" strokeWidth="2" />
        </svg>
        <Caret className="ml-1 rotate-180" />
        <input
          type="text"
          aria-label="搜索"
          defaultValue="电子合同签署平台"
          className="ml-[6px] w-[154px] bg-transparent text-[15px] text-black outline-none"
        />
        <button type="button" className="h-full w-[71px] bg-[#2488fb] text-[15px] text-[#e6f2ff]">
          搜索一下
        </button>
      </div>
      <span className="ml-[10px] h-9 w-[5px] border-x border-[#46525f]" />
      <div className="ml-4 flex h-full">
        <button type="button" aria-label="Internet Explorer" className="flex w-[75px] items-center justify-center">
          <svg viewBox="0 0 36 36" className="h-9 w-9" fill="none">
            <path d="M8 20h22c1-16-20-18-22-3-1 15 17 18 21 7" stroke="#5cc8f2" strokeWidth="6" />
            <path d="M3 33C-2 26 22-3 34 3c2 1 1 4 0 6" stroke="#f2c230" strokeWidth="3" />
          </svg>
        </button>
        <button type="button" aria-label="360浏览器" className="flex w-[75px] items-center justify-center">
          <svg viewBox="0 0 36 36" className="h-9 w-9" fill="none">
            <circle cx="18" cy="18" r="14" fill="#69bd2c" stroke="#fff" strokeWidth="3" />
            <path d="M11 19h14c0-10-14-11-14 0 0 9 11 9 14 4" stroke="#fff" strokeWidth="4" />
            <path d="M4 34c-3-4 18-32 30-31" stroke="#3d9a35" strokeWidth="2" />
          </svg>
        </button>
        <button type="button" aria-label="资源管理器" className="mx-2 flex w-[61px] items-center justify-center border-b-3 border-[#76b4e4]">
          <svg viewBox="0 0 34 30" className="h-[30px] w-[34px]">
            <path d="M1 2h11l3 3h17v22H1z" fill="#e9a320" />
            <path d="M1 7h32v20H1z" fill="#fbd668" />
            <path d="M6 16q0-2 2-2h17q2 0 2 2v11h-5v-6H11v6H6z" fill="#3d8fd0" />
          </svg>
        </button>
        <button type="button" aria-label="WPS" className="flex w-[73px] items-center justify-center border-b-3 border-[#76b4e4] bg-[#4f5b68]">
          <svg viewBox="0 0 36 28" className="h-7 w-9" fill="none" strokeLinejoin="round">
            <path d="M0 1h10l5 13 3 5-4 8h-4z" fill="#e8231f" />
            <path d="M36 1H26c-4 0-5 2-4 5l2 5-3 16h6z" fill="#e8231f" />
            <path d="M12 27 22 2h6l-9 25z" fill="#ff6a2a" />
          </svg>
        </button>
        <button type="button" aria-label="录屏" className="ml-2 flex w-[61px] items-center justify-center border-b-3 border-[#76b4e4]">
          <svg viewBox="0 0 36 36" className="h-9 w-9">
            <circle cx="18" cy="18" r="17" fill="#e8681c" stroke="#b84508" strokeWidth="2" />
            <path d="M8 8l6 3c2-1 6-1 8 0l6-3v9c0 7-5 9-10 9S8 24 8 17z" fill="#17100c" />
            <path d="m8 8 4 4-3 4zM28 8l-4 4 3 4z" fill="#fff" />
            <path d="M9 17c3-3 6-2 9 0 3-2 6-3 9 0-2 4-7 4-9 1-2 3-7 3-9-1" fill="#e8b87c" />
            <path d="M15 26h6v6h-6z" fill="#17100c" />
          </svg>
        </button>
      </div>

      <div className="ml-auto flex h-full items-center">
        <svg viewBox="0 0 34 32" className="h-8 w-[34px]" aria-hidden="true">
          <path d="M12 1c8 6 4 17-11 16 8-3 11-7 11-16" fill="#f8b830" />
          <path d="M9 31c-7-1-6-11 1-10 3-11 15-9 16-1 9 0 9 10 2 11z" fill="#d5e1f7" />
        </svg>
        <div className="relative ml-3 flex w-[84px] shrink-0 items-center text-[22px] whitespace-nowrap">
          <span className="shrink-0">22℃&nbsp; 多云</span>
          <div className="absolute top-1/2 left-1 w-[74px] -translate-y-1/2 text-center text-[18px] leading-6">
            76℃
            <br />
            CPU温度
          </div>
        </div>
        {trayIcons.map(([label, icon]) => (
          <button key={label} type="button" aria-label={label} className="flex w-9 shrink-0 items-center justify-center">
            {icon}
          </button>
        ))}
        <button type="button" className="w-9 text-[20px]">
          中
        </button>
        <button type="button" aria-label="输入法" className="ml-[6px] flex w-9 justify-center">
          <svg viewBox="0 0 24 24" className="h-6 w-6">
            <rect width="24" height="24" rx="3" fill="#3b82e0" />
            <circle cx="12" cy="12" r="6" fill="none" stroke="#e8f2ff" strokeWidth="3" />
            <path d="m7 3 10 18" stroke="#bfe0ff" strokeWidth="2" />
          </svg>
        </button>
        <div className="ml-[18px] w-[92px] text-center text-[18px] leading-6 whitespace-nowrap">
          21:25 周六
          <br />
          2022/9/17
        </div>
        <button type="button" className="relative mr-[6px] ml-7 h-[34px] w-[38px]">
          <svg viewBox="0 0 24 24" className="h-6 w-6" aria-hidden="true">
            <path d="M0 2h24v20H0z" fill="#fff" />
            <path d="m9 7 6 5-6 5z" fill="#222" />
          </svg>
          <span className="absolute right-[2px] bottom-0 h-[21px] w-[22px] bg-[#e00b0b] text-[13px] leading-5">13</span>
        </button>
        <span className="mr-[6px] h-full w-[2px] bg-[#6a6a6a]" />
      </div>
      <span className="pointer-events-none absolute top-0 right-0 text-[38px] leading-[56px] font-light whitespace-nowrap text-[#d0d0d0]/70">
        CSDN @QQ3295391197
      </span>
    </div>
  );
}

export default function App() {
  return (
    <div className="h-screen bg-black px-[7px]">
      <div className="relative flex h-full flex-col overflow-hidden font-['Noto_Sans','Noto_Sans_CJK_SC',sans-serif] text-[18px] leading-6 text-[#363a42]">
        <TabBar />
        <MenuBar />
        <Ribbon />
        <div className="flex min-h-0 flex-1">
          <Document />
          <ScrollBar />
          <SidePanel />
        </div>
        <StatusBar />
        <Taskbar />
        <div className="absolute top-[9px] left-[2px] flex h-[57px] w-2 items-end rounded-full bg-[linear-gradient(to_bottom,#1f3578_60%,#4f5f5c_75%)] px-px pb-1">
          <i className="h-[14px] w-full bg-[repeating-linear-gradient(to_bottom,#5fc860_0_2px,#3f5f48_2px_3px)]" />
        </div>
      </div>
    </div>
  );
}
